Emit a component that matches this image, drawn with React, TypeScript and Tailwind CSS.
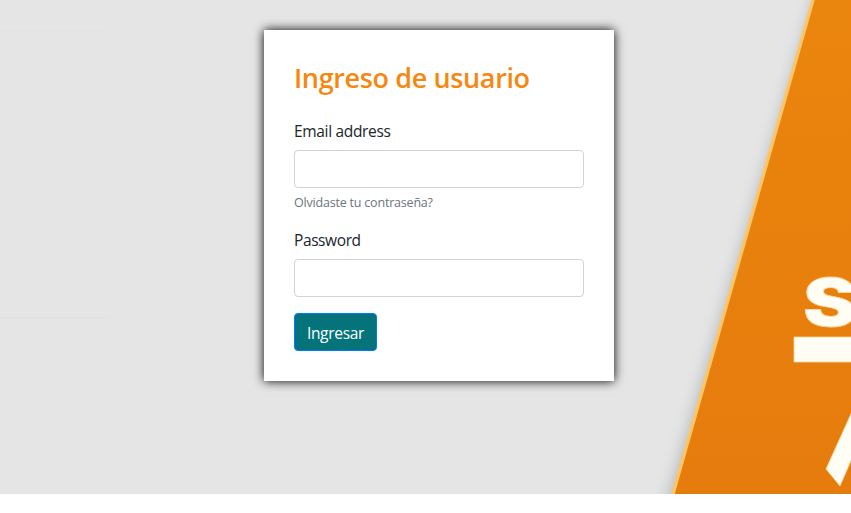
import React from "react";

function Backdrop() {
  return (
    <svg className="absolute inset-0 h-full w-full" viewBox="0 0 851 494" preserveAspectRatio="none" aria-hidden="true">
      <defs>
        <linearGradient id="orange" x1="0" y1="0" x2="0" y2="1">
          <stop offset="0" stopColor="#eb860b" />
          <stop offset="1" stopColor="#e67b0b" />
        </linearGradient>
        <filter id="shade" x="-20%" y="-20%" width="140%" height="140%">
          <feGaussianBlur stdDeviation="8" />
        </filter>
        <filter id="soft" x="-10%" y="-10%" width="120%" height="120%">
          <feGaussianBlur stdDeviation="0.7" />
        </filter>
      </defs>
      <path d="M0 31H107M0 318H109" stroke="#e3e3e3" strokeWidth="2" />
      <path d="M824 -30L660 530H900V-30Z" fill="#8f979c" opacity="0.65" filter="url(#shade)" />
      <g filter="url(#soft)">
        <path d="M821.5 -30L664.5 524H900V-30Z" fill="url(#orange)" />
        <path d="M821.5 -30L664.5 524" stroke="#fcc668" strokeWidth="3.4" />
      </g>
      <g filter="url(#soft)" fill="#fffdf4" stroke="#f8d7a0" strokeWidth="0.8">
        <text x="803" y="326" fontFamily="Inter, 'Liberation Sans', sans-serif" fontWeight="900" fontSize="66" textLength="54" lengthAdjust="spacingAndGlyphs">S</text>
        <path d="M794 337H860V362H794Z" />
        <path d="M826 469L860 394V440L840 486Z" />
      </g>
    </svg>
  );
}

export default function App() {
  const input = "block h-[38px] w-full rounded border border-[#ced4da] bg-white px-3 text-base outline-none";
  return (
    <div className="h-[513px] w-full overflow-hidden bg-white font-['Open_Sans','Noto_Sans',sans-serif] text-[#212529]">
      <main className="relative flex h-[494px] items-start overflow-hidden bg-[#e5e5e5] pt-[30px] pl-[264px]">
        <Backdrop />
        <form className="relative h-[351px] w-[350px] bg-white p-[30px] shadow-[0_0_10px_#000]" onSubmit={(e) => e.preventDefault()}>
          <h1 className="mb-6 h-[34px] whitespace-nowrap text-[27px] leading-[35px] font-semibold tracking-[-0.37px] text-[#f6870f]">Ingreso de usuario</h1>
          <label htmlFor="email" className="mb-2 block h-6 text-[15.5px] leading-[26px] tracking-[-0.33px]">Email address</label>
          <input id="email" type="email" className={input} />
          <a className="mt-1 block h-[19px] text-[12.5px] leading-[21px] tracking-[-0.2px] text-[#6c757d]">Olvidaste tu contraseña?</a>
          <label htmlFor="password" className="mt-4 mb-2 block h-6 text-[15.5px] leading-[26px] tracking-[-0.4px]">Password</label>
          <input id="password" type="password" className={input} />
          <button className="mt-4 block h-[38px] w-[83px] rounded border border-[#007bff] bg-[#04747a] pt-0.5 text-[15.5px] leading-6 tracking-[-0.3px] text-white">Ingresar</button>
        </form>
      </main>
    </div>
  );
}
